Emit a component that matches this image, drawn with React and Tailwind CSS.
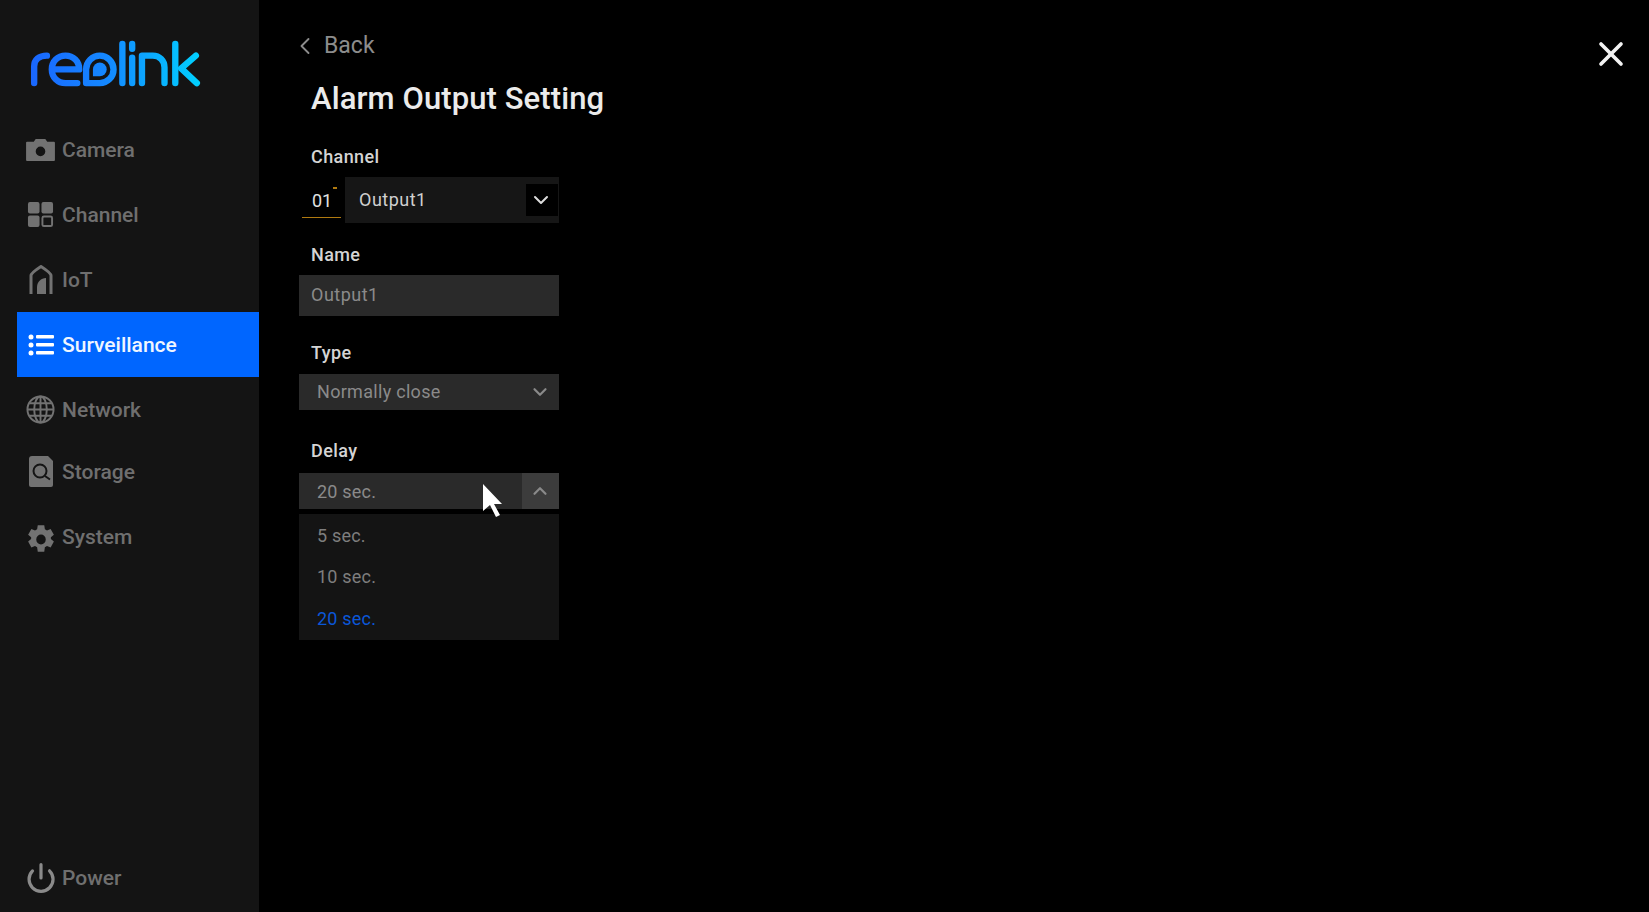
import { ChevronDown, ChevronLeft, ChevronUp, Power, X } from "lucide-react";

const CameraIcon = () => (
  <svg viewBox="0 0 30 26" className="h-[25px] w-[29px]" fill="#727272">
    <path fillRule="evenodd" d="M1 5h7l2-3h10l2 3h7a1 1 0 0 1 1 1v18a1 1 0 0 1-1 1H1a1 1 0 0 1-1-1V6a1 1 0 0 1 1-1zm14 5a5 5 0 1 0 0 10 5 5 0 0 0 0-10z" />
  </svg>
);

const ChannelIcon = () => (
  <svg viewBox="0 0 28 28" className="h-[27px] w-[27px]" fill="#727272">
    <rect x="1" y="1" width="12" height="12" rx="2" />
    <rect x="15" y="1" width="12" height="12" rx="2" />
    <rect x="1" y="15" width="12" height="12" rx="2" />
    <rect x="16" y="16" width="10" height="10" rx="1.5" fill="none" stroke="#727272" strokeWidth="2" />
  </svg>
);

const IotIcon = () => (
  <svg viewBox="0 0 24 29" className="h-[29px] w-[24px]" fill="none">
    <path d="M2 29V10.500C2 8 12 1.500 12 1.500s10 6.500 10 9V29" stroke="#727272" strokeWidth="3" strokeLinejoin="round" />
    <path d="M8 29v-7c0-5 4-9 9-9v16z" fill="#727272" />
  </svg>
);

const ListIcon = () => (
  <svg viewBox="0 0 26 22" className="h-[22px] w-[26px]" fill="#fff">
    <circle cx="3" cy="3" r="2.500" />
    <circle cx="3" cy="11" r="2.500" />
    <circle cx="3" cy="19" r="2.500" />
    <rect x="8" y="1" width="18" height="3.500" rx="1" />
    <rect x="8" y="9" width="18" height="3.500" rx="1" />
    <rect x="8" y="17" width="18" height="3.500" rx="1" />
  </svg>
);

const GlobeIcon = () => (
  <svg viewBox="0 0 30 30" className="h-[29px] w-[29px]" fill="none" stroke="#727272" strokeWidth="2">
    <circle cx="15" cy="15" r="13.500" />
    <ellipse cx="15" cy="15" rx="6.500" ry="13.500" />
    <path d="M15 1.500v27M1.500 15h27M3.500 8.500h23M3.500 21.500h23" />
  </svg>
);

const StorageIcon = () => (
  <svg viewBox="0 0 24 31" className="h-[31px] w-[24px]" fill="none">
    <path fill="#727272" d="M3 0h16l5 5v24a2 2 0 0 1-2 2H2a2 2 0 0 1-2-2V3a3 3 0 0 1 3-3z" />
    <circle cx="11" cy="15" r="6.500" stroke="#141414" strokeWidth="2" />
    <path d="M16 20l5 3.500" stroke="#141414" strokeWidth="2" />
  </svg>
);

const GearIcon = () => (
  <svg viewBox="0 0 24 24" className="mt-[5px] h-[31px] w-[30px]" fill="#727272" preserveAspectRatio="none">
    <path fillRule="evenodd" d="M14.600 1l.5 3 1.700 1 2.900-1.100 2.600 4.500-2.400 1.900v1.400l2.400 1.900-2.600 4.500-2.900-1.100-1.700 1-.5 3.400H9.400l-.5-3.400-1.700-1-2.900 1.100-2.600-4.500 2.400-1.900v-1.400L1.700 8.400l2.600-4.500 2.900 1.100 1.700-1 .5-3zM12 8.200a3.800 3.800 0 1 0 0 7.600 3.800 3.800 0 0 0 0-7.600z" />
  </svg>
);

const ReolinkLogo = () => (
  <svg viewBox="0 0 176 50" className="h-[49px] w-[173px]" fill="none">
    <defs>
      <linearGradient id="logoGrad" x1="0" y1="0" x2="176" y2="0" gradientUnits="userSpaceOnUse">
        <stop offset="0" stopColor="#1a66ff" />
        <stop offset="0.45" stopColor="#1488ff" />
        <stop offset="1" stopColor="#00d2ff" />
      </linearGradient>
    </defs>
    <g stroke="url(#logoGrad)" strokeWidth="6.500" strokeLinecap="round" strokeLinejoin="round">
      <path d="M5 44V27c0-7 5-11 13-11" />
      <path d="M24 30h27c0-8-6-14-14-14s-14 6-14 14 6 14 14 14h12" />
      <path d="M58 44V30a14 14 0 1 1 14 14z" />
      <path d="M95 4v40" />
      <path d="M105 18v26" />
      <path d="M105 4v5" />
      <path d="M115 44V16h11c7 0 12 5 12 12v16" />
      <path d="M149 4v40" />
      <path d="M170 16l-15 13 16 15" />
    </g>
    <path d="M65 37v-7a7 7 0 1 1 7 7z" fill="url(#logoGrad)" />
  </svg>
);

const NAV_ITEMS = [
  { label: "Camera", icon: <CameraIcon /> },
  { label: "Channel", icon: <ChannelIcon /> },
  { label: "IoT", icon: <IotIcon /> },
  { label: "Surveillance", icon: <ListIcon />, active: true },
  { label: "Network", icon: <GlobeIcon /> },
  { label: "Storage", icon: <StorageIcon />, tight: true },
  { label: "System", icon: <GearIcon /> },
];

const FieldLabel = ({ children, className }) => (
  <p className={`pl-[12px] text-[18px] leading-[20px] font-medium tracking-[0.4px] text-[#d4d4d4] ${className}`}>{children}</p>
);

const App = () => {
  return (
    <div className="relative flex h-[912px] w-[1649px] overflow-hidden bg-black font-['Roboto',sans-serif]">
      {/* sidebar */}
      <aside className="flex h-full w-[259px] shrink-0 flex-col bg-[#141414]">
        <div className="mb-[28px] mt-[40px] pl-[29px]">
          <ReolinkLogo />
        </div>
        <nav className="flex flex-col pl-[17px]">
          {NAV_ITEMS.map((item) => (
            <div
              key={item.label}
              className={`flex h-[65px] items-center ${item.active ? "bg-[#0066ff]" : ""} ${item.tight ? "-mt-[3px]" : ""}`}
            >
              <span className="flex w-[45px] justify-center pl-[2px]">{item.icon}</span>
              <span className={`pt-[2px] text-[21px] font-medium ${item.active ? "text-[#f0f6ff]" : "text-[#6f6f6f]"}`}>
                {item.label}
              </span>
            </div>
          ))}
        </nav>
        <div className="mb-[9px] mt-auto flex h-[50px] items-center pl-[17px]">
          <span className="flex w-[45px] justify-center pl-[2px]">
            <Power size={32} strokeWidth={2.4} color="#8a8a8a" />
          </span>
          <span className="pt-[2px] text-[21px] font-medium text-[#6f6f6f]">Power</span>
        </div>
      </aside>

      {/* main */}
      <main className="ml-[40px] w-[260px]">
        <div className="mt-[32px] flex h-[28px] items-center text-[#8c8c8c]">
          <ChevronLeft size={28} strokeWidth={1.6} className="ml-[-8px]" />
          <span className="ml-[5px] text-[23px]">Back</span>
        </div>
        <h1 className="mt-[19px] pl-[12px] text-[31px] leading-[40px] font-medium tracking-[0.1px] whitespace-nowrap text-[#ebebeb]">
          Alarm Output Setting
        </h1>

        <FieldLabel className="mt-[28px]">Channel</FieldLabel>
        <div className="mt-[10px] flex h-[46px]">
          <div className="relative flex w-[46px] items-center pl-[13px] text-[18px] text-[#e0e0e0]">
            01
            <span className="absolute left-[34px] top-[10px] h-[2px] w-[4px] bg-[#b07a10]" />
            <span className="absolute bottom-[5px] left-[3px] h-px w-[39px] bg-[#b07a10]" />
          </div>
          <div className="flex flex-1 items-center justify-between bg-[#161616] pl-[14px] pr-[1px]">
            <span className="pb-[2px] text-[18px] tracking-[0.5px] text-[#d0d0d0]">Output1</span>
            <span className="flex h-[32px] w-[32px] items-center justify-center bg-black">
              <ChevronDown size={24} strokeWidth={2} color="#dcdcdc" className="-ml-[2px]" />
            </span>
          </div>
        </div>

        <FieldLabel className="mt-[22px]">Name</FieldLabel>
        <div className="mt-[10px] flex h-[41px] items-center bg-[#2a2a2a] pb-[2px] pl-[12px] text-[18px] tracking-[0.5px] text-[#8a8a8a]">Output1</div>

        <FieldLabel className="mt-[27px]">Type</FieldLabel>
        <div className="mt-[11px] flex h-[36px] items-center justify-between bg-[#2a2a2a] pl-[18px] pr-[8px] text-[18px] tracking-[0.3px] text-[#8a8a8a]">
          <span className="pb-[2px]">Normally close</span>
          <ChevronDown size={22} strokeWidth={2.4} color="#8a8a8a" />
        </div>

        <FieldLabel className="mt-[31px]">Delay</FieldLabel>
        <div className="mt-[12px] flex h-[36px] items-center justify-between bg-[#2a2a2a] pl-[18px] text-[18px] tracking-[0.2px] text-[#8a8a8a]">
          20 sec.
          <span className="flex h-full w-[37px] items-center justify-center bg-[#3c3c3c]">
            <ChevronUp size={22} strokeWidth={2.4} color="#8a8a8a" className="-ml-[1px]" />
          </span>
        </div>
        <ul className="mt-[5px] flex h-[126px] flex-col justify-center bg-[#141414] pl-[18px] text-[18px] tracking-[0.2px] text-[#7e7e7e]">
          <li className="flex h-[41.5px] items-center">5 sec.</li>
          <li className="flex h-[41.5px] items-center pb-[2px]">10 sec.</li>
          <li className="flex h-[41.5px] items-center text-[#0b57d8]">20 sec.</li>
        </ul>
      </main>

      {/* mouse cursor, on top of the delay select */}
      <svg viewBox="0 0 20 34" className="absolute left-[483px] top-[484px] h-[34px] w-[20px]" fill="#fff">
        <path d="M0 0l19 20h-8l6 11-4 2-6-12-7 6z" />
      </svg>

      <button type="button" className="absolute left-[1591px] top-[34px] text-[#f2f2f2]">
        <X size={40} strokeWidth={2.2} />
      </button>
    </div>
  );
};

export default App;
